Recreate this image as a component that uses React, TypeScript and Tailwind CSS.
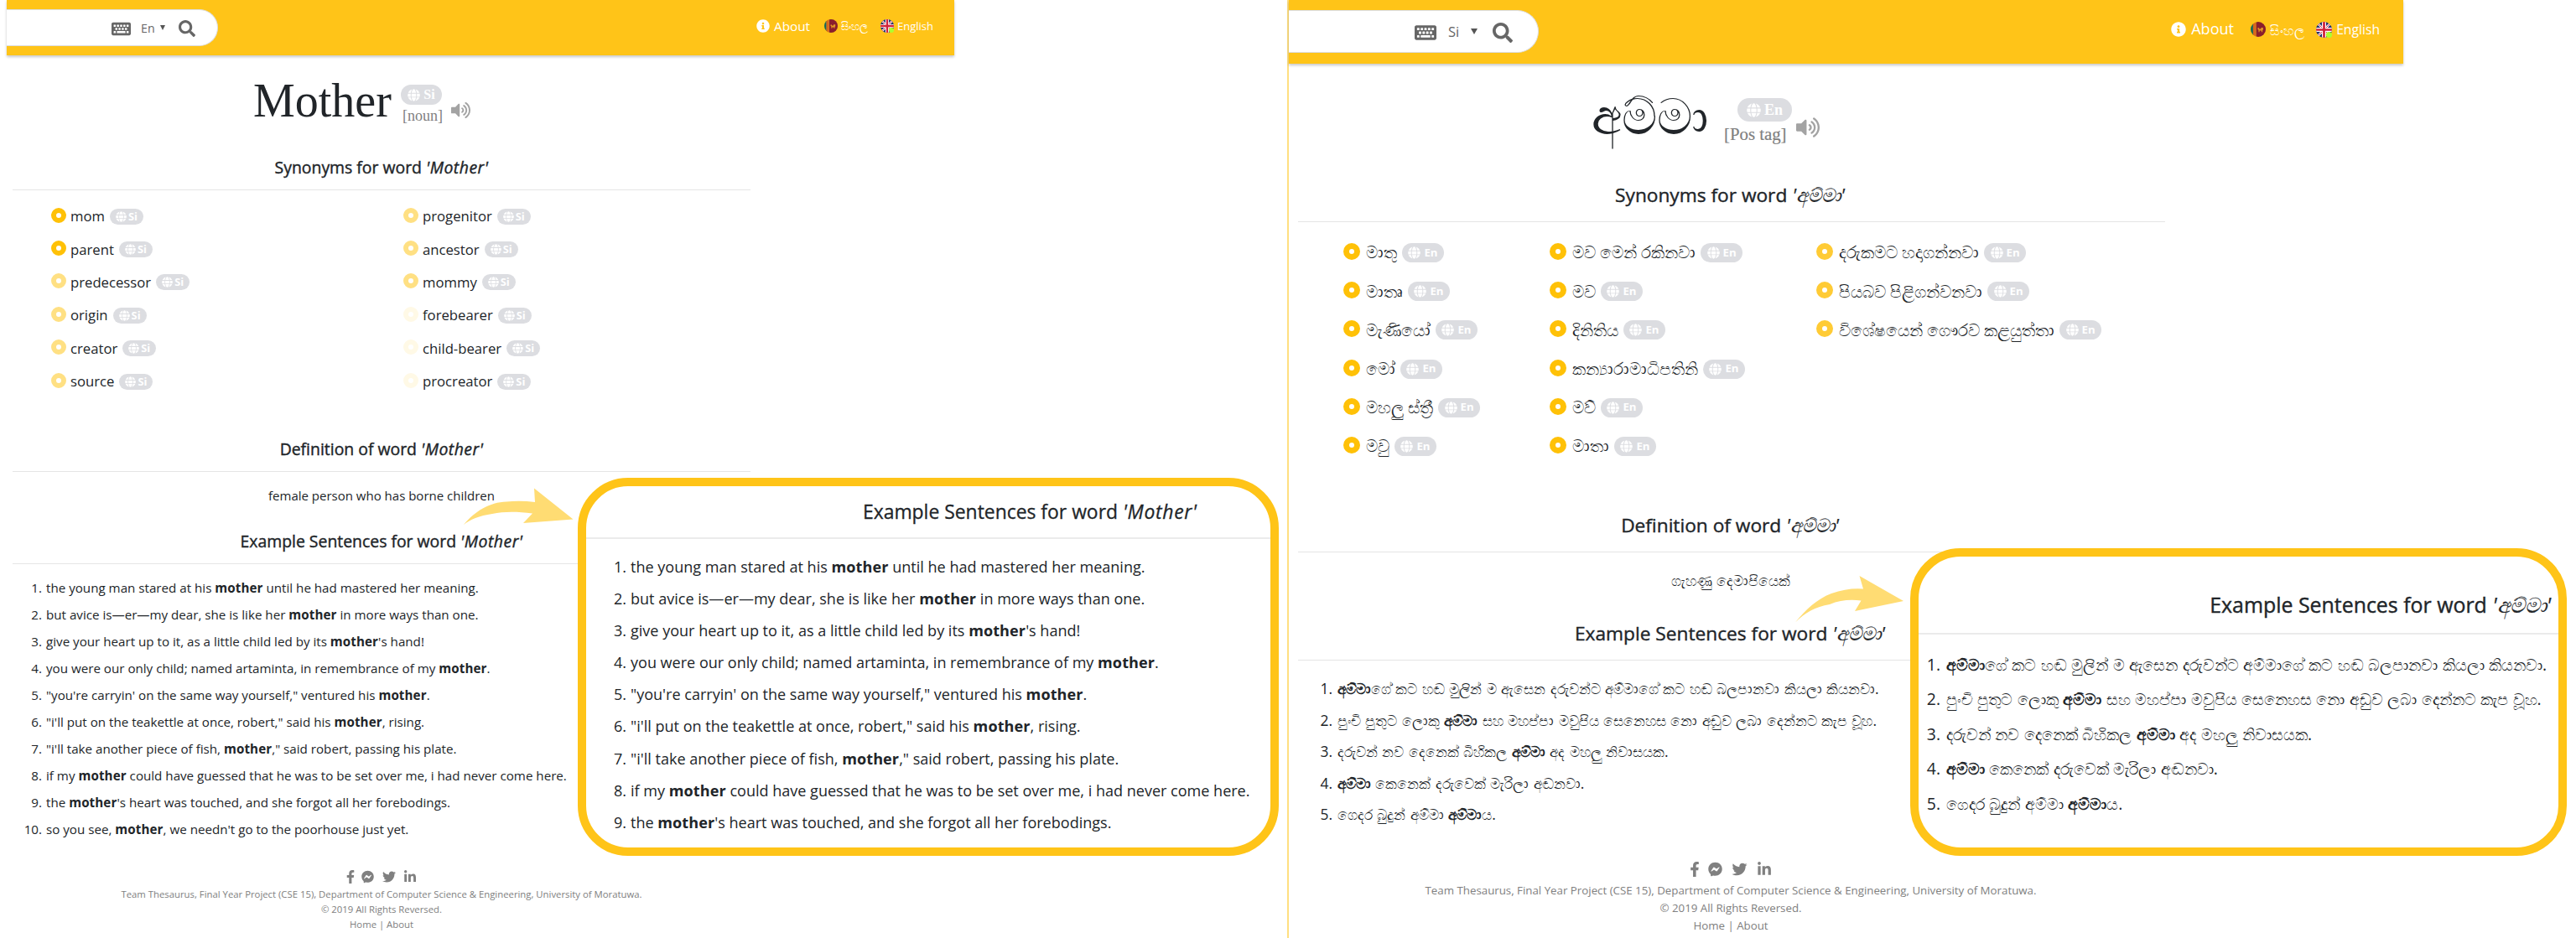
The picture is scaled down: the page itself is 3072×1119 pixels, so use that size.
import type { ReactNode } from 'react';
import {
  FaFacebookF,
  FaFacebookMessenger,
  FaGlobe,
  FaInfoCircle,
  FaKeyboard,
  FaLinkedinIn,
  FaSearch,
  FaTwitter,
  FaVolumeUp,
} from 'react-icons/fa';

type Lang = 'en' | 'si';
type Level = 'full' | 'strong' | 'half' | 'faint';
type Synonym = { text: string; level: Level };

const SANS = "font-['Open_Sans','Noto_Sans',sans-serif]";
const SERIF = "font-['Liberation_Serif',serif]";

const EN_COLUMNS: Synonym[][] = [
  [
    { text: 'mom', level: 'full' },
    { text: 'parent', level: 'full' },
    { text: 'predecessor', level: 'half' },
    { text: 'origin', level: 'half' },
    { text: 'creator', level: 'half' },
    { text: 'source', level: 'half' },
  ],
  [
    { text: 'progenitor', level: 'half' },
    { text: 'ancestor', level: 'half' },
    { text: 'mommy', level: 'half' },
    { text: 'forebearer', level: 'faint' },
    { text: 'child-bearer', level: 'faint' },
    { text: 'procreator', level: 'faint' },
  ],
];

const SI_COLUMNS: Synonym[][] = [
  ['මාතු', 'මාතෘ', 'මැණියෝ', 'මෝ', 'මහලු ස්ත්‍රී', 'මවු'].map((text) => ({ text, level: 'full' as Level })),
  ['මව මෙන් රකිනවා', 'මව', 'දිනිතිය', 'කන්‍යාරාමාධිපතිනි', 'මව්', 'මාතා'].map((text) => ({
    text,
    level: 'full' as Level,
  })),
  ['දරුකමට හදාගන්නවා', 'පියබව පිළිගන්වනවා', 'විශේෂයෙන් ගෞරව කළයුත්තා'].map((text) => ({
    text,
    level: 'strong' as Level,
  })),
];

const M = () => <b className="font-bold tracking-[0.1px]">mother</b>;
const A = () => <b className="font-bold">අම්මා</b>;

const EN_SENTENCES: ReactNode[] = [
  <>the young man stared at his <M /> until he had mastered her meaning.</>,
  <>but avice is—er—my dear, she is like her <M /> in more ways than one.</>,
  <>give your heart up to it, as a little child led by its <M />'s hand!</>,
  <>you were our only child; named artaminta, in remembrance of my <M />.</>,
  <>"you're carryin' on the same way yourself," ventured his <M />.</>,
  <>"i'll put on the teakettle at once, robert," said his <M />, rising.</>,
  <>"i'll take another piece of fish, <M />," said robert, passing his plate.</>,
  <>if my <M /> could have guessed that he was to be set over me, i had never come here.</>,
  <>the <M />'s heart was touched, and she forgot all her forebodings.</>,
  <>so you see, <M />, we needn't go to the poorhouse just yet.</>,
];

const SI_SENTENCES: ReactNode[] = [
  <><A />ගේ කට හඬ මුලින් ම ඇසෙන දරුවන්ට අම්මාගේ කට හඬ බලපානවා කියලා කියනවා.</>,
  <>පුංචි පුතුට ලොකු <A /> සහ මහප්පා මවුපිය සෙනෙහස නො අඩුව ලබා දෙන්නට කැප වූහ.</>,
  <>දරුවන් නව දෙනෙක් බිහිකල <A /> අද මහලු නිවාසයක.</>,
  <><A /> කෙනෙක් දරුවෙක් මැරිලා අඬනවා.</>,
  <>ගෙදර බුදුන් අම්මා <A />ය.</>,
];

const RING: Record<Level, string> = {
  full: 'border-[#ffc107]',
  strong: 'border-[#ffcb35]',
  half: 'border-[#ffe083]',
  faint: 'border-[#fff9e6]',
};

function SriLankaFlag({ className }: { className: string }) {
  return (
    <svg viewBox="0 0 16 16" className={className}>
      <defs>
        <clipPath id="disc-lk">
          <circle cx="8" cy="8" r="8" />
        </clipPath>
      </defs>
      <g clipPath="url(#disc-lk)">
        <rect width="16" height="16" fill="#e8a21c" />
        <rect width="2.6" height="16" fill="#12695a" />
        <rect x="2.6" width="2.6" height="16" fill="#d9651c" />
        <rect x="5.8" width="10.2" height="16" fill="#8a1f2c" />
        <path d="M7.5 6.5h1.5v1h2V6.2h2.2v2.2l-.7.6v1.8h-1V9.4H9.4v1.4h-1V8.6l-.9-.6z" fill="#e39a24" />
      </g>
    </svg>
  );
}

function BritishFlag({ className }: { className: string }) {
  return (
    <svg viewBox="0 0 16 16" className={className}>
      <defs>
        <clipPath id="disc-gb">
          <circle cx="8" cy="8" r="8" />
        </clipPath>
      </defs>
      <g clipPath="url(#disc-gb)">
        <rect width="16" height="16" fill="#20306e" />
        <path d="M0 0l16 16M16 0L0 16" stroke="#fff" strokeWidth="2.2" />
        <path d="M0 0l16 16M16 0L0 16" stroke="#d0213a" strokeWidth="0.8" />
        <path d="M8 0v16M0 8h16" stroke="#fff" strokeWidth="4.2" />
        <path d="M8 0v16M0 8h16" stroke="#d0213a" strokeWidth="2.3" />
      </g>
      <circle cx="13" cy="13" r="3" fill="#adff2f" />
    </svg>
  );
}

function Header({ lang }: { lang: Lang }) {
  const en = lang === 'en';
  return (
    <header
      className={`flex shrink-0 justify-between bg-[#ffc418] shadow-[0_2px_3px_rgba(0,0,0,0.22)] ${
        en ? 'h-[66px] w-[1130px]' : 'h-[76px] w-[1329px]'
      }`}
    >
      <div
        className={`flex items-center rounded-r-full border-y border-r border-[#dcdde1] bg-white text-[#666] ${
          en ? 'mt-[11px] h-[44px] w-[252px] pl-[125px]' : 'mt-[12px] h-[51px] w-[298px] pl-[150px]'
        }`}
      >
        <FaKeyboard className={en ? 'mt-[2px] h-[21px] w-[23px]' : 'mt-[2px] h-[24px] w-[26px]'} />
        <span className={en ? 'ml-[12px] mt-px w-[23px] text-[14.2px]' : 'ml-[14px] mt-px w-[27px] text-[16.5px]'}>
          {en ? 'En' : 'Si'}
        </span>
        <span
          className={`border-x-transparent border-t-[#555] ${
            en ? 'border-x-[3.5px] border-t-[6px]' : 'border-x-[4px] border-t-[7px]'
          }`}
        />
        <FaSearch className={en ? 'ml-[16px] mt-[2px] size-[20px]' : 'ml-[18px] mt-[2px] size-[24px]'} />
      </div>
      <nav
        className={`flex items-center text-white ${
          en ? 'h-[62px] pr-[25px]' : 'h-[70px] pr-[28px]'
        }`}
      >
        <FaInfoCircle className={en ? 'size-[16px]' : 'size-[18px]'} />
        <span className={en ? 'ml-[5px] w-[60px] text-[15.3px]' : 'ml-[6px] w-[71px] text-[18.1px]'}>About</span>
        <SriLankaFlag className={en ? 'size-[16px]' : 'size-[18px]'} />
        <span className={en ? 'ml-[4px] w-[47px] pt-[2px] text-[13.2px]' : 'ml-[5px] w-[55px] pt-[3px] text-[15.6px]'}>
          සිංහල
        </span>
        <BritishFlag className={en ? 'size-[16px] overflow-visible' : 'size-[19px] overflow-visible'} />
        <span className={en ? 'ml-[4px] pt-px text-[13px]' : 'ml-[5px] pt-px text-[15.7px]'}>English</span>
      </nav>
    </header>
  );
}

function Badge({ lang }: { lang: Lang }) {
  const en = lang === 'en';
  return (
    <span
      className={`flex shrink-0 items-center justify-center rounded-full bg-[#dcdde1] font-bold text-white ${
        en ? 'mt-[3px] h-[19px] w-[40px] gap-[2px] text-[12.8px]' : 'mt-[3px] h-[23px] w-[50px] gap-[4px] text-[13.2px]'
      }`}
    >
      <FaGlobe className={en ? 'size-[13px]' : 'size-[15px]'} />
      {en ? 'Si' : 'En'}
    </span>
  );
}

function Title({ lang }: { lang: Lang }) {
  if (lang === 'en') {
    return (
      <div className={`flex h-[121px] items-start whitespace-nowrap pl-[287px] pt-[26px] ${SERIF}`}>
        <h1 className="w-[165px] text-[56px] leading-[56px]">Mother</h1>
        <div className="ml-[11px] w-[49px] pt-[9px]">
          <span className="flex h-[24px] items-center justify-center gap-[4px] rounded-full bg-[#dcdde1] text-[16px] font-bold text-white">
            <FaGlobe className="size-[15px]" />
            Si
          </span>
          <span className="ml-[2px] mt-[3px] block text-[18px] leading-5 text-[#808080]">[noun]</span>
        </div>
        <FaVolumeUp className="ml-[11px] mt-[28px] h-[23px] w-[23px] text-[#a3a3a3]" />
      </div>
    );
  }
  return (
    <div className={`flex h-[145px] items-start whitespace-nowrap pl-[350px] pt-[34px] ${SERIF}`}>
      <h1 className="w-[139px] text-[59px] leading-[60px]">අම්මා</h1>
      <div className="ml-[19px] w-[81px] pt-[7px]">
        <span className="ml-[16px] flex h-[28px] items-center justify-center gap-[4px] rounded-full bg-[#dcdde1] text-[18px] font-bold text-white">
          <FaGlobe className="size-[17px]" />
          En
        </span>
        <span className="mt-[3px] block text-[20.8px] leading-6 text-[#808080] [-webkit-text-stroke:0.2px_#808080]">
          [Pos tag]
        </span>
      </div>
      <FaVolumeUp className="ml-[5px] mt-[28px] h-[28px] w-[28px] text-[#a3a3a3]" />
    </div>
  );
}

function WordHeading({ lang, label }: { lang: Lang; label: string }) {
  const en = lang === 'en';
  return (
    <h2
      className={`shrink-0 whitespace-nowrap border-b border-[#e5e5e5] text-center leading-6 [-webkit-text-stroke:0.4px_#212529] ${
        en ? 'h-[40px] pt-px text-[19.4px]' : 'h-[44px] pr-[4px] text-[22.7px]'
      }`}
    >
      {label}{' '}
      {en ? (
        <i className="tracking-[0.5px]">'Mother'</i>
      ) : (
        <i className="[-webkit-text-stroke:0.2px_#212529]">'අම්මා'</i>
      )}
    </h2>
  );
}

function SynonymColumn({ lang, items, width }: { lang: Lang; items: Synonym[]; width: string }) {
  const en = lang === 'en';
  return (
    <ul className={`shrink-0 whitespace-nowrap ${width}`}>
      {items.map((s) => (
        <li key={s.text} className={`flex items-center ${en ? 'h-[39.4px] text-[16.7px]' : 'h-[46.2px] text-[19.5px]'}`}>
          <span
            className={`shrink-0 rounded-full ${RING[s.level]} ${
              en ? 'size-[18px] border-[6px]' : 'size-[20px] border-[7px]'
            }`}
          />
          <span className={en ? 'ml-[5px] mr-[6px] pt-[2px]' : 'ml-[7px] mr-[6px] pt-[2px]'}>{s.text}</span>
          <Badge lang={lang} />
        </li>
      ))}
    </ul>
  );
}

function Sentences({ items, row, num }: { items: ReactNode[]; row: string; num: string }) {
  return (
    <ol className="whitespace-nowrap">
      {items.map((s, i) => (
        <li key={i} className={`flex ${row}`}>
          <span className={`shrink-0 text-right ${num}`}>{i + 1}.</span>
          <span>{s}</span>
        </li>
      ))}
    </ol>
  );
}

function Footer({ lang }: { lang: Lang }) {
  const en = lang === 'en';
  const icon = en ? 'h-[16px]' : 'h-[18px]';
  return (
    <footer
      className={`whitespace-nowrap text-center text-[#808080] ${
        en ? 'mt-[33px] text-[11.33px] leading-[18px]' : 'mt-[37px] pr-[2px] text-[13.3px] leading-[21.2px]'
      }`}
    >
      <div className={`flex items-center justify-center ${en ? 'mb-[4px] h-[16px]' : 'mb-[6px] h-[18px]'}`}>
        <FaFacebookF className={`${icon} ${en ? 'w-[10px]' : 'w-[12px]'}`} />
        <FaFacebookMessenger className={`${icon} ${en ? 'ml-[8px] w-[15px]' : 'ml-[10px] w-[17px]'}`} />
        <FaTwitter className={`${icon} ${en ? 'ml-[10px] w-[16px]' : 'ml-[11px] w-[19px]'}`} />
        <FaLinkedinIn className={`${icon} ${en ? 'ml-[9px] w-[16px]' : 'ml-[11px] w-[18px]'}`} />
      </div>
      <p>
        Team Thesaurus, Final Year Project (CSE 15), Department of Computer Science &amp; Engineering, University of
        Moratuwa.
      </p>
      <p>© 2019 All Rights Reversed.</p>
      <p>Home | About</p>
    </footer>
  );
}

function EnglishPage() {
  return (
    <section className="relative w-[1535px] shrink-0 pl-2">
      <Header lang="en" />
      <main className="ml-[7px] flex w-[880px] flex-col">
        <Title lang="en" />
        <WordHeading lang="en" label="Synonyms for word" />
        <div className="flex h-[296px] pl-[46px] pt-[10px]">
          <SynonymColumn lang="en" items={EN_COLUMNS[0]} width="w-[420px]" />
          <SynonymColumn lang="en" items={EN_COLUMNS[1]} width="w-[300px]" />
        </div>
        <WordHeading lang="en" label="Definition of word" />
        <p className="h-[70px] pt-4 text-center text-[15px] leading-6">female person who has borne children</p>
        <WordHeading lang="en" label="Example Sentences for word" />
        <div className="pt-3">
          <Sentences items={EN_SENTENCES} row="text-[15.17px] leading-[32px]" num="w-[35px] mr-[5px]" />
        </div>
        <Footer lang="en" />
      </main>
      <svg viewBox="0 0 132 44" className="absolute left-[552px] top-[582px] h-[44px] w-[132px]">
        <path
          d="M1 44C14 28 32 17 52 16.500Q69 15 86 17L85 0.500L131.500 37.500L72 42L83 30.500C64 28 49 28 35 31C20 33 8 38 1 44Z"
          fill="#ffdc73"
        />
      </svg>
      <aside className="absolute left-[689px] top-[570px] h-[451px] w-[836px] rounded-[60px] border-[10px] border-[#ffc418] bg-white">
        <h2 className="h-[63px] whitespace-nowrap border-b-2 border-[#ebebeb] pl-[330px] pt-[19px] text-[22.9px] leading-6 [-webkit-text-stroke:0.3px_#212529]">
          Example Sentences for word <i className="tracking-[0.7px]">'Mother'</i>
        </h2>
        <div className="pt-[14px]">
          <Sentences
            items={EN_SENTENCES.slice(0, 9)}
            row="text-[18.05px] leading-[38.1px]"
            num="w-[48px] mr-[5px]"
          />
        </div>
      </aside>
    </section>
  );
}

function SinhalaPage() {
  return (
    <section className="relative w-[1535px] shrink-0">
      <Header lang="si" />
      <main className="ml-[11px] flex w-[1034px] flex-col">
        <Title lang="si" />
        <WordHeading lang="si" label="Synonyms for word" />
        <div className="flex h-[350px] pl-[54px] pt-[12px]">
          <SynonymColumn lang="si" items={SI_COLUMNS[0]} width="w-[246px]" />
          <SynonymColumn lang="si" items={SI_COLUMNS[1]} width="w-[318px]" />
          <SynonymColumn lang="si" items={SI_COLUMNS[2]} width="w-[400px]" />
        </div>
        <WordHeading lang="si" label="Definition of word" />
        <p className="h-[85px] pr-[2px] pt-[22px] text-center text-[17.1px] leading-6">ගැහණු දෙමාපියෙක්</p>
        <WordHeading lang="si" label="Example Sentences for word" />
        <div className="pt-[15px]">
          <Sentences
            items={SI_SENTENCES}
            row="text-[17.4px] leading-[37.5px] [word-spacing:0.9px]"
            num="w-[41px] mr-[6px]"
          />
        </div>
        <Footer lang="si" />
      </main>
      <svg viewBox="0 0 130 56" className="absolute left-[603px] top-[687px] h-[56px] w-[130px]">
        <path
          d="M1 55.500C14 40 26 28 44 21Q64 14 82 15.500L77.500 0L130 30L72 42L79.500 29.500C66 28 54 29 42 34C25 37 12 44 1 55.500Z"
          fill="#ffdc73"
        />
      </svg>
      <aside className="absolute left-[741px] top-[654px] h-[367px] w-[783px] rounded-[60px] border-[10px] border-[#ffc418] bg-white">
        <h2 className="h-[93px] whitespace-nowrap border-b-2 border-[#ebebeb] pr-[9px] pt-[45px] text-right text-[24.9px] leading-6 [-webkit-text-stroke:0.4px_#212529]">
          Example Sentences for word <i className="[-webkit-text-stroke:0.2px_#212529]">'අම්මා'</i>
        </h2>
        <div className="pt-[15px]">
          <Sentences
            items={SI_SENTENCES}
            row="text-[19.35px] leading-[41.4px] [word-spacing:0.4px]"
            num="w-[26px] mr-[7px]"
          />
        </div>
      </aside>
    </section>
  );
}

export default function App() {
  return (
    <div className={`flex h-[1119px] w-[3072px] overflow-hidden bg-white text-[#212529] ${SANS}`}>
      <EnglishPage />
      <div className="w-[2px] shrink-0 bg-[#ffdf80]" />
      <SinhalaPage />
    </div>
  );
}
